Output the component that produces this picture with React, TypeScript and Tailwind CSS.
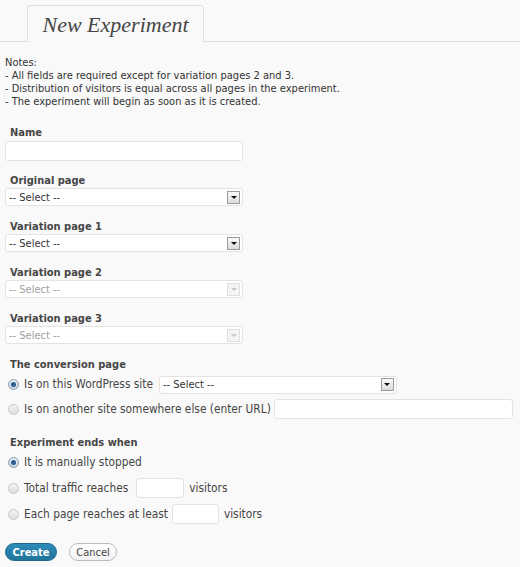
import React from "react";

const Radio = ({ checked }: { checked?: boolean }) => (
  <span
    className={
      "inline-flex w-[11px] h-[11px] rounded-full border items-center justify-center shrink-0 " +
      (checked
        ? "border-[#8a9bab] bg-[linear-gradient(#e8eef4,#c9d4de)]"
        : "border-[#c8c8c8] bg-[linear-gradient(#f4f4f4,#dcdcdc)]")
    }
  >
    {checked && <span className="w-[5px] h-[5px] rounded-full bg-[#2b5f91]" />}
  </span>
);

const Select = ({ disabled, w = "w-[238px]" }: { disabled?: boolean; w?: string }) => (
  <div
    className={
      "h-[18px] bg-white border border-[#e3e3e3] rounded-[3px] flex items-center justify-between pl-[3px] pr-[2px] " +
      w
    }
  >
    <span className={disabled ? "text-[#a0a0a0]" : "text-[#333]"}>-- Select --</span>
    <span
      className={
        "w-[13px] h-[13px] border flex items-center justify-center " +
        (disabled ? "border-[#dedede] bg-[#f4f4f4]" : "border-[#9a9a9a] bg-[linear-gradient(#fafafa,#dcdcdc)]")
      }
    >
      <span
        className={
          "w-0 h-0 border-l-[3px] border-r-[3px] border-t-[3px] border-l-transparent border-r-transparent " +
          (disabled ? "border-t-[#c8c8c8]" : "border-t-[#111]")
        }
      />
    </span>
  </div>
);

const Input = ({ w }: { w: string }) => (
  <div className={"h-[20px] bg-white border border-[#e3e3e3] rounded-[3px] " + w} />
);

const RLabel = ({ children }: { children: React.ReactNode }) => (
  <span className="ml-[5px] text-[#464646] text-[11.8px] whitespace-nowrap">{children}</span>
);

export default function App() {
  return (
    <div className="w-[520px] h-[567px] bg-[#f9f9f9] text-[#333] font-['DejaVu_Sans_Condensed','DejaVu_Sans',sans-serif] text-[11px] leading-[13px] overflow-hidden">
      <div className="h-[42px] border-b border-[#dfdfdf] pt-[5px] pl-[27px] flex">
        <div className="w-[177px] h-[37px] border border-b-0 border-[#dfdfdf] rounded-t-[4px] bg-[#f9f9f9] -mb-px flex items-center justify-center pt-[1px]">
          <span className="font-['Liberation_Serif',serif] italic text-[22px] leading-[26px] text-[#464646]">
            New Experiment
          </span>
        </div>
      </div>

      <div className="pl-[5px] pt-[14px] text-[#333]">
        <div>Notes:</div>
        <div>- All fields are required except for variation pages 2 and 3.</div>
        <div>- Distribution of visitors is equal across all pages in the experiment.</div>
        <div>- The experiment will begin as soon as it is created.</div>
      </div>

      <div className="pl-[5px]">
        <div className="mt-[18px] pl-[5px] font-bold text-[#464646]">Name</div>
        <div className="mt-[2px]">
          <Input w="w-[238px]" />
        </div>

        <div className="mt-[13px] pl-[5px] font-bold text-[#464646]">Original page</div>
        <div className="mt-[1px]">
          <Select />
        </div>

        <div className="mt-[14px] pl-[5px] font-bold text-[#464646]">Variation page 1</div>
        <div className="mt-[1px]">
          <Select />
        </div>

        <div className="mt-[14px] pl-[5px] font-bold text-[#464646]">Variation page 2</div>
        <div className="mt-[1px]">
          <Select disabled />
        </div>

        <div className="mt-[14px] pl-[5px] font-bold text-[#464646]">Variation page 3</div>
        <div className="mt-[1px]">
          <Select disabled />
        </div>

        <div className="mt-[14px] pl-[5px] font-bold text-[#464646]">The conversion page</div>
        <div className="mt-[4px] flex items-center pl-[3px] h-[19px]">
          <Radio checked />
          <RLabel>Is on this WordPress site</RLabel>
          <div className="ml-[6px]">
            <Select w="w-[238px]" />
          </div>
        </div>
        <div className="mt-[5px] flex items-center pl-[3px] h-[20px]">
          <Radio />
          <RLabel>Is on another site somewhere else (enter URL)</RLabel>
          <div className="ml-[3px]">
            <Input w="w-[239px]" />
          </div>
        </div>

        <div className="mt-[17px] pl-[5px] font-bold text-[#464646]">Experiment ends when</div>
        <div className="mt-[7px] flex items-center pl-[3px] h-[13px]">
          <Radio checked />
          <RLabel>It is manually stopped</RLabel>
        </div>
        <div className="mt-[9px] flex items-center pl-[3px] h-[20px]">
          <Radio />
          <RLabel>Total traffic reaches</RLabel>
          <div className="ml-[8px]">
            <Input w="w-[48px]" />
          </div>
          <span className="ml-[5px] text-[#464646] text-[11.8px]">visitors</span>
        </div>
        <div className="mt-[6px] flex items-center pl-[3px] h-[20px]">
          <Radio />
          <RLabel>Each page reaches at least</RLabel>
          <div className="ml-[4px]">
            <Input w="w-[47px]" />
          </div>
          <span className="ml-[5px] text-[#464646] text-[11.8px]">visitors</span>
        </div>

        <div className="mt-[19px] flex items-center gap-[12px]">
          <span className="h-[18px] w-[52px] justify-center rounded-full bg-[linear-gradient(#2e8bb8,#21759b)] border border-[#1d6a8e] text-white font-bold flex items-center">
            Create
          </span>
          <span className="h-[18px] w-[48px] justify-center rounded-full bg-[linear-gradient(#ffffff,#f2f2f2)] border border-[#bbb] text-[#464646] flex items-center">
            Cancel
          </span>
        </div>
      </div>
    </div>
  );
}
